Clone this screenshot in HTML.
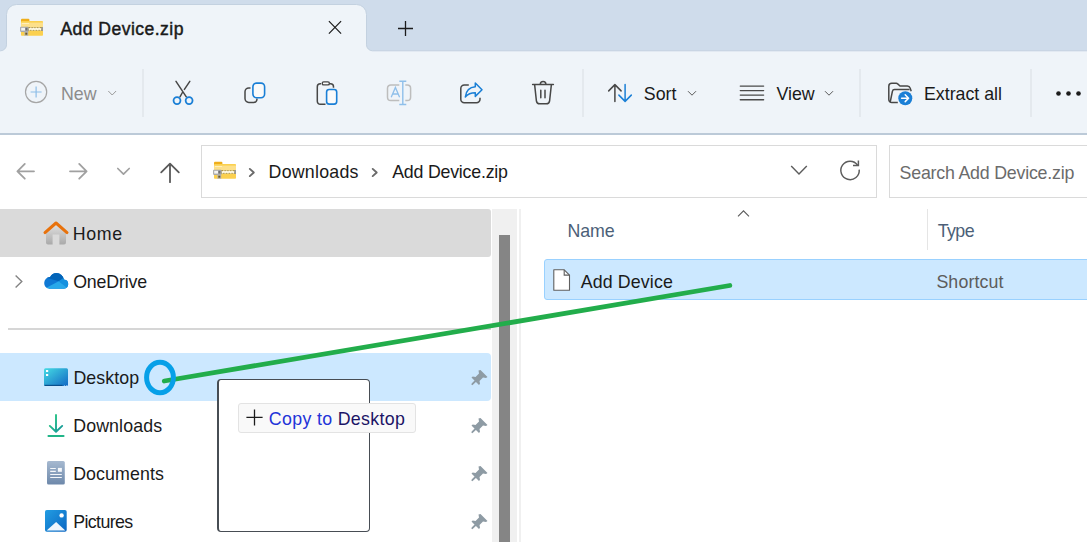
<!DOCTYPE html>
<html><head><meta charset="utf-8">
<style>
*{margin:0;padding:0;box-sizing:border-box}
html,body{width:1087px;height:542px;overflow:hidden;background:#fff}
body{position:relative;font-family:"Liberation Sans",sans-serif;color:#1a1a1a;font-size:17.5px}
.a{position:absolute}
.t{position:absolute;white-space:nowrap;line-height:20px}
svg{position:absolute;overflow:visible}
</style></head><body>

<!-- tab strip -->
<div class="a" style="left:0;top:0;width:1087px;height:52px;background:#cfdceb"></div>
<svg style="left:0;top:0" width="1087" height="60"><path d="M -2 50.8 L 0.5 50.8 A 6 6 0 0 0 6.5 44.8 L 6.5 14.5 A 10 10 0 0 1 16.5 4.5 L 356.5 4.5 A 10 10 0 0 1 366.5 14.5 L 366.5 44.8 A 6 6 0 0 0 372.5 50.8 L 1090 50.8 L 1090 62 L -2 62 Z" fill="#eff4f9" stroke="#c3d1e0" stroke-width="1"/></svg>
<!-- toolbar -->
<div class="a" style="left:0;top:52px;width:1087px;height:81px;background:#eff4f9"></div>
<div class="a" style="left:0;top:133px;width:1087px;height:2px;background:#bccad8"></div>

<svg style="left:0;top:0" width="60" height="50">
<rect x="21" y="18.8" width="8.4" height="4.5" rx="1" fill="#efae1c"/>
<rect x="21" y="20.9" width="22" height="14.9" rx="0.8" fill="#fbd04f"/>
<rect x="21" y="22.6" width="22" height="4.4" fill="#fde08a"/>
<rect x="22" y="23.2" width="7" height="0.8" fill="#fff3c8"/>
<rect x="21" y="27" width="22" height="3.9" fill="#b2953c"/>
<path d="M28.8 28.2 l0.78 1.5 l0.78 -1.5 l0.78 1.5 l0.78 -1.5 l0.78 1.5 l0.78 -1.5 l0.78 1.5 l0.78 -1.5 l0.78 1.5 l0.78 -1.5 l0.78 1.5 l0.78 -1.5 l0.78 1.5 l0.78 -1.5 l0.78 1.5 l0.78 -1.5" stroke="#fffbe8" stroke-width="1.1" fill="none"/>
<rect x="41.4" y="27" width="1.6" height="3.9" fill="#9a9a9a"/>
<rect x="20.1" y="26.7" width="8.5" height="5.2" rx="0.8" fill="#a8a8a8"/>
<rect x="21.2" y="27.8" width="4" height="2.8" fill="#f4f4f4"/>
<rect x="25.4" y="27.9" width="2" height="2.6" fill="#707070"/>
<rect x="24.4" y="31.6" width="3.8" height="4.2" fill="#b5b5b5"/>
<rect x="25.3" y="32.7" width="2" height="2" fill="#6e5a20"/>
</svg>
<div class="t" style="letter-spacing:0.44px;left:60.40px;top:20.50px;font-size:17.60px;line-height:17.60px;color:#1a1a1a;-webkit-text-stroke:0.45px #1a1a1a;">Add Device.zip</div>
<svg style="left:0;top:0" width="430" height="50">
<path d="M328.9 21.2 L341.1 33.6 M341.1 21.2 L328.9 33.6" stroke="#1c1c1c" stroke-width="1.2"/>
<path d="M405.5 21 V36 M398 28.5 H413" stroke="#1c1c1c" stroke-width="1.3"/>
</svg>
<svg style="left:0;top:52px" width="1087" height="82" viewBox="0 52 1087 82">
<circle cx="36.1" cy="92" r="10.6" fill="none" stroke="#a6a6a6" stroke-width="1.2"/>
<path d="M36.1 86.5 V97.5 M30.6 92 H41.6" stroke="#8dbde8" stroke-width="1.2"/>
<path d="M108.3 91 L112.2 95 L116.1 91" fill="none" stroke="#9a9a9a" stroke-width="1"/>
<rect x="142.5" y="69" width="1" height="48" fill="#d9dee4"/>
<!-- cut -->
<path d="M176 81.4 L186.3 96.8 M189.8 81.4 L184.4 89.4 M182.4 92.5 L180 96.8" stroke="#474747" stroke-width="1.5" stroke-linecap="round"/>
<circle cx="177" cy="100.6" r="3.45" fill="none" stroke="#1a7fd6" stroke-width="1.8"/>
<circle cx="189.1" cy="100.6" r="3.45" fill="none" stroke="#1a7fd6" stroke-width="1.8"/>
<!-- copy -->
<path d="M250.5 87.9 H248.8 A3.8 3.8 0 0 0 245 91.7 V98.6 A3.8 3.8 0 0 0 248.8 102.4 H253.7 A3.3 3.3 0 0 0 256.9 99.8 V98.6" fill="none" stroke="#474747" stroke-width="1.5"/>
<rect x="252.9" y="83.1" width="11.7" height="14.6" rx="3.6" fill="#fafafa" stroke="#1a7fd6" stroke-width="1.6"/>
<!-- paste -->
<path d="M321 83.8 H320.3 A3 3 0 0 0 317.3 86.8 V101.3 A3 3 0 0 0 320.3 104.3 H325.5" fill="none" stroke="#474747" stroke-width="1.5"/>
<path d="M329.5 83.8 H330.5 A3 3 0 0 1 333.5 86.8 V87.8" fill="none" stroke="#474747" stroke-width="1.5"/>
<rect x="322.2" y="81.9" width="7.2" height="3" rx="1.5" fill="#fafafa" stroke="#474747" stroke-width="1.4"/>
<rect x="326.6" y="89.5" width="10.1" height="14.6" rx="2.6" fill="#fafafa" stroke="#1a7fd6" stroke-width="1.6"/>
<!-- rename -->
<path d="M399.3 84.9 H390.8 A3.3 3.3 0 0 0 387.5 88.2 V97.3 A3.3 3.3 0 0 0 390.8 100.6 H399.3 M405.3 84.9 H407.3 A3.3 3.3 0 0 1 410.6 88.2 V97.3 A3.3 3.3 0 0 1 407.3 100.6 H405.3" fill="none" stroke="#bdbdbd" stroke-width="1.5"/>
<path d="M391.2 97.3 L395.4 87.4 L399.6 97.3 M392.6 94 H398.2" fill="none" stroke="#8fbfea" stroke-width="1.3"/>
<path d="M402.8 81.3 V104.5 M399.3 81.3 H406.3 M399.3 104.5 H406.3" fill="none" stroke="#8fbfea" stroke-width="1.4"/>
<!-- share -->
<path d="M468.8 84.9 H464.3 A3.5 3.5 0 0 0 460.8 88.4 V99.3 A3.5 3.5 0 0 0 464.3 102.8 H476.5 A3.5 3.5 0 0 0 480 99.3 V97.8" fill="none" stroke="#474747" stroke-width="1.5"/>
<path d="M475.3 83 L482 89.7 L475.3 96.4 V92.8 C470.6 92.8 467.6 94.3 465.3 97 C466 90.6 469.8 87.1 475.3 86.7 Z" fill="none" stroke="#1a7fd6" stroke-width="1.5" stroke-linejoin="round"/>
<!-- delete -->
<path d="M532.6 84.4 H553.4" stroke="#474747" stroke-width="1.5" stroke-linecap="round"/>
<path d="M540.3 84.4 A2.8 2.8 0 0 1 545.9 84.4" fill="none" stroke="#474747" stroke-width="1.5"/>
<path d="M534.6 84.4 L536.4 100.8 A3.4 3.4 0 0 0 539.8 103.8 H546.2 A3.4 3.4 0 0 0 549.6 100.8 L551.4 84.4" fill="none" stroke="#474747" stroke-width="1.5"/>
<path d="M540.8 90.3 V97.8 M545 90.3 V97.8" stroke="#474747" stroke-width="1.5" stroke-linecap="round"/>
<rect x="582.5" y="69" width="1" height="48" fill="#d9dee4"/>
<!-- sort -->
<path d="M614.9 101.4 V84.8 M608.7 90.9 L614.9 84.6 L621.1 90.9" fill="none" stroke="#474747" stroke-width="1.5" stroke-linecap="round" stroke-linejoin="round"/>
<path d="M625.1 84.6 V101.2 M618.9 95.1 L625.1 101.4 L631.3 95.1" fill="none" stroke="#1a7fd6" stroke-width="1.5" stroke-linecap="round" stroke-linejoin="round"/>
<path d="M688 91.2 L692 95.2 L696 91.2" fill="none" stroke="#5a5a5a" stroke-width="1"/>
<!-- view -->
<path d="M740.3 86.1 H763.6 M740.3 90.6 H763.6 M740.3 95.1 H763.6 M740.3 99.7 H763.6" stroke="#4a4a4a" stroke-width="1.4" stroke-linecap="round"/>
<path d="M825 91.2 L829 95.2 L833 91.2" fill="none" stroke="#5a5a5a" stroke-width="1"/>
<rect x="859.5" y="69" width="1" height="48" fill="#d9dee4"/>
<!-- extract -->
<path d="M897.8 102.6 H891.8 A3 3 0 0 1 888.8 99.6 V86.3 A3 3 0 0 1 891.8 83.3 H896.3 A2 2 0 0 1 897.7 83.9 L900 86 H907.3 A3 3 0 0 1 910.2 88.1 L911.2 91.2" fill="none" stroke="#474747" stroke-width="1.5" stroke-linejoin="round"/>
<path d="M890.2 102 L892.4 91.3 A2.2 2.2 0 0 1 894.5 89.6 H909.6" fill="none" stroke="#474747" stroke-width="1.5" stroke-linejoin="round"/>
<circle cx="905.3" cy="98.2" r="7" fill="#1a7fd6"/>
<path d="M901.6 98.2 H908.6 M905.2 94.8 L908.6 98.2 L905.2 101.6" fill="none" stroke="#fff" stroke-width="1.5" stroke-linecap="round" stroke-linejoin="round"/>
<rect x="1030.5" y="69" width="1" height="48" fill="#d9dee4"/>
<circle cx="1058.5" cy="93.5" r="2.3" fill="#1c1c1c"/>
<circle cx="1068.5" cy="93.5" r="2.3" fill="#1c1c1c"/>
<circle cx="1078.5" cy="93.5" r="2.3" fill="#1c1c1c"/>
</svg>
<div class="t" style="letter-spacing:0.00px;left:61.00px;top:85.73px;font-size:17.80px;line-height:17.80px;color:#8c8c8c;">New</div>
<div class="t" style="letter-spacing:0.03px;left:643.80px;top:86.03px;font-size:17.80px;line-height:17.80px;color:#1a1a1a;">Sort</div>
<div class="t" style="letter-spacing:0.03px;left:776.40px;top:86.03px;font-size:17.80px;line-height:17.80px;color:#1a1a1a;">View</div>
<div class="t" style="letter-spacing:-0.01px;left:924.00px;top:86.03px;font-size:17.80px;line-height:17.80px;color:#1a1a1a;">Extract all</div>
<div class="a" style="left:201px;top:145px;width:676px;height:53px;border:1px solid #dadada;background:#fff"></div>
<div class="a" style="left:889px;top:145px;width:220px;height:53px;border:1px solid #dadada;background:#fff"></div>
<svg style="left:0;top:140px" width="1087" height="60" viewBox="0 140 1087 60">
<path d="M17.4 171.3 H34 M24.8 163.9 L17.4 171.3 L24.8 178.7" fill="none" stroke="#a0a0a0" stroke-width="1.8" stroke-linecap="round" stroke-linejoin="round"/>
<path d="M86.6 171.3 H70 M79.2 163.9 L86.6 171.3 L79.2 178.7" fill="none" stroke="#a0a0a0" stroke-width="1.8" stroke-linecap="round" stroke-linejoin="round"/>
<path d="M117.8 168.5 L123.5 174.2 L129.2 168.5" fill="none" stroke="#a0a0a0" stroke-width="1.7" stroke-linecap="round" stroke-linejoin="round"/>
<path d="M170 182.2 V164 M161.2 172.4 L170 163.6 L178.8 172.4" fill="none" stroke="#5a5a5a" stroke-width="1.8" stroke-linecap="round" stroke-linejoin="round"/>
<path d="M249.8 168.9 L253.8 172.5 L249.8 176.1" fill="none" stroke="#6a6a6a" stroke-width="1.9" stroke-linecap="round" stroke-linejoin="round"/>
<path d="M372.7 168.9 L376.7 172.5 L372.7 176.1" fill="none" stroke="#6a6a6a" stroke-width="1.9" stroke-linecap="round" stroke-linejoin="round"/>
<path d="M791.2 166 L799 174 L806.8 166" fill="none" stroke="#5c5c5c" stroke-width="1.4"/>
<path d="M857.6 165.2 A9.2 9.2 0 1 0 859.2 169.6" fill="none" stroke="#5c5c5c" stroke-width="1.5"/>
<path d="M853 165.6 H858.4 V160.6" fill="none" stroke="#5c5c5c" stroke-width="1.5"/>
<g transform="translate(193,143)">
<rect x="21" y="18.8" width="8.4" height="4.5" rx="1" fill="#efae1c"/>
<rect x="21" y="20.9" width="22" height="14.9" rx="0.8" fill="#fbd04f"/>
<rect x="21" y="22.6" width="22" height="4.4" fill="#fde08a"/>
<rect x="22" y="23.2" width="7" height="0.8" fill="#fff3c8"/>
<rect x="21" y="27" width="22" height="3.9" fill="#b2953c"/>
<path d="M28.8 28.2 l0.78 1.5 l0.78 -1.5 l0.78 1.5 l0.78 -1.5 l0.78 1.5 l0.78 -1.5 l0.78 1.5 l0.78 -1.5 l0.78 1.5 l0.78 -1.5 l0.78 1.5 l0.78 -1.5 l0.78 1.5 l0.78 -1.5 l0.78 1.5 l0.78 -1.5" stroke="#fffbe8" stroke-width="1.1" fill="none"/>
<rect x="41.4" y="27" width="1.6" height="3.9" fill="#9a9a9a"/>
<rect x="20.1" y="26.7" width="8.5" height="5.2" rx="0.8" fill="#a8a8a8"/>
<rect x="21.2" y="27.8" width="4" height="2.8" fill="#f4f4f4"/>
<rect x="25.4" y="27.9" width="2" height="2.6" fill="#707070"/>
<rect x="24.4" y="31.6" width="3.8" height="4.2" fill="#b5b5b5"/>
<rect x="25.3" y="32.7" width="2" height="2" fill="#6e5a20"/>
</g>
</svg>
<div class="t" style="letter-spacing:0.23px;left:268.60px;top:163.93px;font-size:17.80px;line-height:17.80px;color:#1a1a1a;">Downloads</div>
<div class="t" style="letter-spacing:-0.22px;left:392.20px;top:163.93px;font-size:17.80px;line-height:17.80px;color:#1a1a1a;">Add Device.zip</div>
<div class="t" style="letter-spacing:-0.21px;left:899.60px;top:164.63px;font-size:17.80px;line-height:17.80px;color:#6b6b6b;">Search Add Device.zip</div>
<div class="a" style="left:0;top:209px;width:491px;height:48px;background:#dadada;border-radius:0 3px 3px 0"></div>
<div class="a" style="left:8px;top:328px;width:483px;height:1.5px;background:#d6d6d6"></div>
<div class="a" style="left:0;top:353px;width:491px;height:48px;background:#cce8ff;border-radius:0 4px 4px 0"></div>
<div class="a" style="left:492px;top:209px;width:25px;height:333px;background:#f0f0f0"></div>
<div class="a" style="left:499px;top:235px;width:11px;height:307px;background:#858585"></div>
<div class="a" style="left:519px;top:209px;width:1.5px;height:333px;background:#f0f0f0"></div>
<svg style="left:0;top:200px" width="500" height="342" viewBox="0 200 500 342">
<defs>
<linearGradient id="hg" x1="0" y1="0" x2="0" y2="1"><stop offset="0" stop-color="#e6e6e6"/><stop offset="1" stop-color="#a9a9a9"/></linearGradient>
<linearGradient id="dg" x1="0" y1="0" x2="1" y2="1"><stop offset="0" stop-color="#45dbe4"/><stop offset="1" stop-color="#1268c4"/></linearGradient>
<linearGradient id="docg" x1="0" y1="0" x2="0" y2="1"><stop offset="0" stop-color="#a6b9d0"/><stop offset="1" stop-color="#6d88aa"/></linearGradient>
</defs>
<!-- home -->
<path d="M46 231 V242.5 A2 2 0 0 0 48 244.5 H52.6 V234.6 H59.4 V244.5 H64 A2 2 0 0 0 66 242.5 V231 L56 222.5 Z" fill="url(#hg)"/>
<path d="M45 232.6 L56 223 L67 232.6" fill="none" stroke="#e8720c" stroke-width="3" stroke-linecap="round" stroke-linejoin="round"/>
<!-- onedrive chevron -->
<path d="M15.6 275.5 L21.8 281.5 L15.6 287.5" fill="none" stroke="#848484" stroke-width="1.4"/>
<!-- onedrive cloud -->
<clipPath id="odc"><circle cx="50" cy="282.9" r="5.8"/><circle cx="56.6" cy="280.4" r="7.3"/><circle cx="63.6" cy="284.1" r="4.6"/><rect x="49" y="281" width="15" height="7.7"/></clipPath>
<g clip-path="url(#odc)">
<rect x="40" y="268" width="32" height="24" fill="#0f78d4"/>
<path d="M40 275.8 L58.7 281.2 L72 275 V268 H40 Z" fill="#0364b8"/>
<path d="M58.7 281.2 L62.6 278.6 L72 276 V292 Z" fill="#1490df"/>
<path d="M42 290 L58.7 281.2 L70 290 Z" fill="#28a8ea"/>
</g>
<!-- desktop -->
<rect x="44" y="368.3" width="24" height="17.7" rx="1.5" fill="url(#dg)"/>
<rect x="46" y="370" width="2.2" height="2" fill="#fff"/>
<rect x="46" y="374" width="2.2" height="2" fill="#fff"/>
<rect x="44.5" y="384.8" width="18" height="1.2" fill="#0a4f8c"/>
<path d="M64 385.6 h1 M66 385.6 h1" stroke="#cfe6f5" stroke-width="0.6"/>
<!-- downloads -->
<linearGradient id="dlg" x1="0" y1="0" x2="1" y2="1"><stop offset="0" stop-color="#2ccf7e"/><stop offset="1" stop-color="#14949c"/></linearGradient>
<path d="M56 415 V431 M49.8 425.9 L56 431.8 L62.2 425.9" fill="none" stroke="url(#dlg)" stroke-width="1.9" stroke-linecap="round" stroke-linejoin="round"/>
<path d="M48.4 436 H63.6" stroke="#20b588" stroke-width="1.9" stroke-linecap="round"/>
<!-- documents -->
<rect x="47" y="461" width="17.8" height="23.6" rx="1.6" fill="url(#docg)"/>
<path d="M50.2 468.5 H55.8 M50.2 471.4 H55.8 M50.2 474.5 H61.8 M50.2 477.5 H61.8" stroke="#f4f7fa" stroke-width="1.2"/>
<rect x="57.9" y="467.9" width="4" height="3.9" fill="#f4f7fa"/>
<!-- pictures -->
<linearGradient id="pg" x1="0" y1="0" x2="1" y2="1"><stop offset="0" stop-color="#229de2"/><stop offset="1" stop-color="#0b66c2"/></linearGradient>
<rect x="45" y="510" width="21.7" height="21.8" rx="1.8" fill="url(#pg)"/>
<path d="M46.6 530.6 L56.1 522 L65.3 530.6 Z" fill="#eef6fd"/>
<circle cx="61.6" cy="515.4" r="2.2" fill="#fff"/>
<!-- pins -->
<g id="pin" fill="#8e9ba4" transform="translate(1.5,0)">
<path d="M479 370 L486 377 L484.5 378 L481.5 377.5 L478 381 L478.5 383.8 L477.5 385 L470 377.5 L471.2 376.5 L474 377 L477.5 373.5 L477 370.5 Z"/>
<path d="M474 381 L470.8 384.2" stroke="#8e9ba4" stroke-width="1.8" stroke-linecap="round"/>
</g>
<use href="#pin" y="48"/><use href="#pin" y="96"/><use href="#pin" y="144"/>
</svg>
<div class="t" style="letter-spacing:0.67px;left:72.80px;top:225.73px;font-size:17.80px;line-height:17.80px;color:#1a1a1a;">Home</div>
<div class="t" style="letter-spacing:-0.15px;left:73.20px;top:273.73px;font-size:17.80px;line-height:17.80px;color:#1a1a1a;">OneDrive</div>
<div class="t" style="letter-spacing:0.08px;left:73.40px;top:369.73px;font-size:17.80px;line-height:17.80px;color:#1a1a1a;">Desktop</div>
<div class="t" style="letter-spacing:0.11px;left:73.20px;top:417.73px;font-size:17.80px;line-height:17.80px;color:#1a1a1a;">Downloads</div>
<div class="t" style="letter-spacing:0.09px;left:73.20px;top:465.63px;font-size:17.80px;line-height:17.80px;color:#1a1a1a;">Documents</div>
<div class="t" style="letter-spacing:-0.61px;left:73.20px;top:513.53px;font-size:17.80px;line-height:17.80px;color:#1a1a1a;">Pictures</div>
<div class="a" style="left:544px;top:259px;width:560px;height:41px;background:#cce8ff;border:1px solid #99d1ff;border-radius:3px"></div>
<div class="a" style="left:927px;top:209px;width:1px;height:41px;background:#e5e5e5"></div>
<svg style="left:0;top:200px" width="1087" height="100" viewBox="0 200 1087 100">
<path d="M738 216.3 L743.5 210.8 L749 216.3" fill="none" stroke="#5a5a5a" stroke-width="1.1"/>
<path d="M553.8 269.8 H564.2 L569.5 275.1 V290.3 H553.8 Z" fill="#fff" stroke="#5f5f5f" stroke-width="1.1" stroke-linejoin="round"/>
<path d="M564.2 269.8 V275.1 H569.5" fill="none" stroke="#5f5f5f" stroke-width="1.1"/>
</svg>
<div class="t" style="letter-spacing:-0.10px;left:567.60px;top:222.73px;font-size:17.80px;line-height:17.80px;color:#4c5f78;">Name</div>
<div class="t" style="letter-spacing:-0.61px;left:937.80px;top:223.03px;font-size:17.80px;line-height:17.80px;color:#4c5f78;">Type</div>
<div class="t" style="letter-spacing:0.12px;left:580.80px;top:274.43px;font-size:17.80px;line-height:17.80px;color:#1a1a1a;">Add Device</div>
<div class="t" style="letter-spacing:0.12px;left:936.40px;top:274.43px;font-size:17.80px;line-height:17.80px;color:#5c5c5c;">Shortcut</div>
<div class="a" style="left:217px;top:379px;width:153px;height:152.5px;border:solid #474d54;border-width:1.6px 1.3px 1.8px 2px;border-radius:4px;background:#fff"></div>
<div class="a" style="left:238px;top:403px;width:178px;height:30px;border:1px solid #e3e3e3;border-radius:3px;background:#f9f9f9"></div>
<svg style="left:0;top:400px" width="300" height="40" viewBox="0 400 300 40">
<path d="M254.5 409.5 V425.5 M246.4 417.4 H262.6" stroke="#1c1c1c" stroke-width="1.3"/>
</svg>
<div class="t" style="letter-spacing:0.33px;left:268.80px;top:410.83px;font-size:17.80px;line-height:17.80px;color:#1a1a1a;"><span style="color:#2233d8">Copy to </span><span style="color:#1c1466">Desktop</span></div>
<svg style="left:0;top:0" width="1087" height="542">
<line x1="164.3" y1="381" x2="729.8" y2="285.5" stroke="#22ad4b" stroke-width="4.8" stroke-linecap="round"/>
<ellipse cx="160" cy="377.5" rx="13.4" ry="15.2" fill="none" stroke="#07a0e8" stroke-width="5"/>
</svg>

</body></html>
